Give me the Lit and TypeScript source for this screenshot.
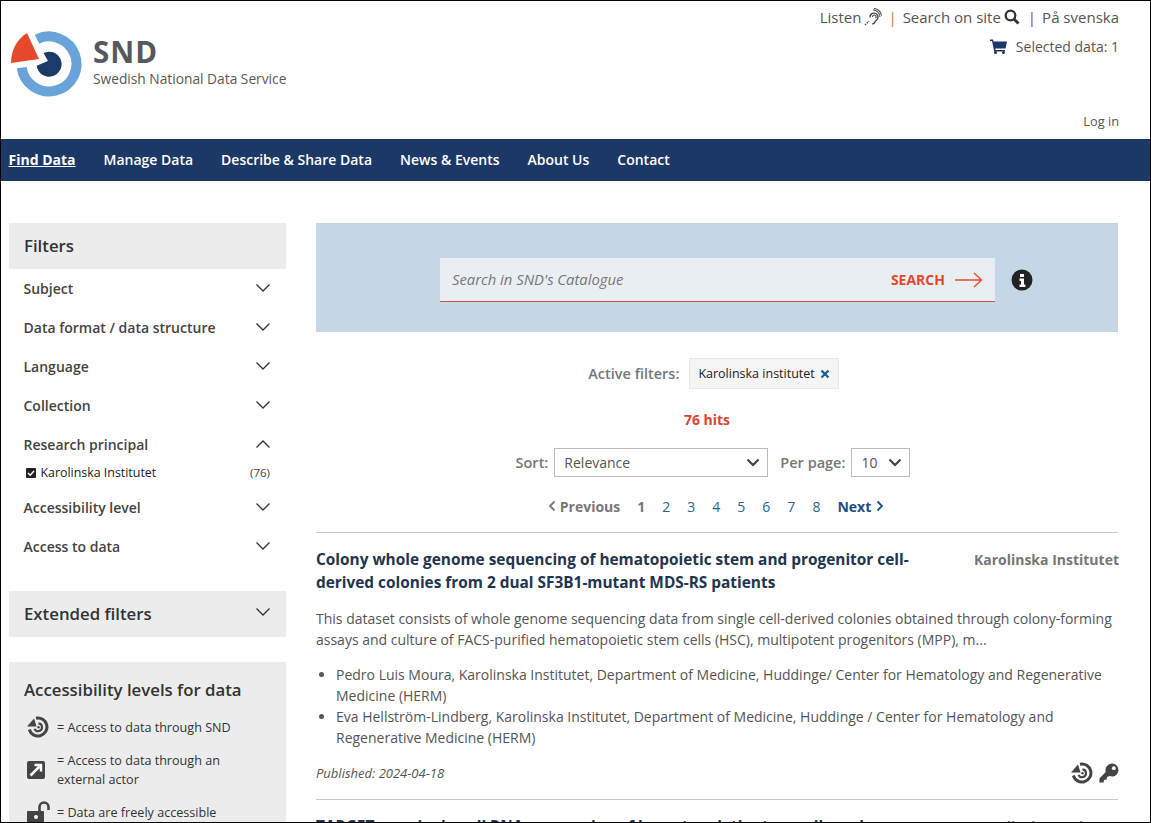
import { LitElement, html, css, svg } from "lit";
import { customElement } from "lit/decorators.js";

const chevDown = html`<svg class="chev" viewBox="0 0 16 10" width="16" height="10"><path d="M1.500 1.500 8 8l6.500-6.500" fill="none" stroke="currentColor" stroke-width="1.300"/></svg>`;
const chevUp = html`<svg class="chev" viewBox="0 0 16 10" width="16" height="10"><path d="M1.500 8.500 8 2l6.500 6.500" fill="none" stroke="currentColor" stroke-width="1.300"/></svg>`;
const thickDown = html`<svg viewBox="0 0 14 9" width="14" height="9"><path d="M1.500 1.500 7 7l5.500-5.500" fill="none" stroke="#444" stroke-width="2.200"/></svg>`;

const sndIcon = (s: number) => html`<svg viewBox="0 0 22 22" width=${s} height=${s}>
  <path d="M9 2.200A9 9 0 1 1 2.300 13.500" fill="none" stroke="#444" stroke-width="3"/>
  <path d="M0 10.500 7 2.500 9.500 10.500Z" fill="#444"/>
  <path d="M11.500 7.400A3.900 3.900 0 1 1 7.500 12.800" fill="none" stroke="#444" stroke-width="2.100"/>
  <circle cx="11.500" cy="11.300" r="1.200" fill="#444"/>
</svg>`;

const externalIcon = html`<svg viewBox="0 0 18 18" width="18" height="18">
  <rect width="18" height="18" rx="2" fill="#444"/>
  <path d="M3.500 14.500 12.500 5.500M7.500 4H14V10.500" fill="none" stroke="#fff" stroke-width="2.500"/>
</svg>`;

const lockIcon = html`<svg viewBox="0 0 24 22" width="24" height="22">
  <path d="M1 10h15a1 1 0 0 1 1 1v11H0V11a1 1 0 0 1 1-1Z" fill="#444"/>
  <path d="M12.500 10V6a4.500 4.500 0 0 1 9 0v3" fill="none" stroke="#444" stroke-width="2.600"/>
  <circle cx="9" cy="16" r="2" fill="#fff"/>
</svg>`;

const keyIcon = html`<svg viewBox="0 0 20 20" width="20" height="20">
  <path d="M13 .5a6.500 6.500 0 0 0-6.200 8.500L.6 15.200.3 19.500h4.200l.6-2.500 2.500-.5.500-2.500 2.600-.9A6.500 6.500 0 1 0 13 .5Z" fill="#444"/>
  <circle cx="14.800" cy="5.200" r="1.900" fill="#fff"/>
</svg>`;

const filters = ["Subject", "Data format / data structure", "Language", "Collection"];
const filters2 = ["Accessibility level", "Access to data"];

@customElement("app-root")
export class AppRoot extends LitElement {
  static styles = css`
    :host { display: block; font-family: "Open Sans", sans-serif; color: #333; }
    * { box-sizing: border-box; }
    .frame { height: 823px; border: 1px solid #000; overflow: hidden; background: #fff; }

    header { height: 138px; display: flex; justify-content: space-between; padding: 0 31px 0 9px; }
    .logo { display: flex; align-items: flex-start; padding-top: 29px; gap: 9px; }
    .logo-text { padding-top: 5px; color: #58585a; }
    .snd { font-size: 29.500px; font-weight: 700; line-height: 33px; letter-spacing: 1px; }
    .tag { font-size: 13.750px; line-height: 18px; margin-top: 2px; }
    .top { display: flex; flex-direction: column; align-items: flex-end; font-size: 15px; color: #555; }
    .links { display: flex; align-items: center; height: 22px; margin-top: 5px; }
    .links svg { margin-left: 3px; }
    .sep { margin: 0 6px 0 10px; }
    .sep.o { color: #c77b3a; margin-left: 6px; }
    .sep.p { color: #8a3a8a; margin-left: 8px; }
    .cart { display: flex; align-items: center; gap: 9px; margin-top: 7px; font-size: 14px; height: 22px; }
    .login { margin-top: auto; font-size: 12.800px; line-height: 18px; padding-bottom: 9px; }

    nav { height: 42px; background: #1c3866; display: flex; align-items: center; padding: 0 0 2px 7.500px; gap: 28px; color: #fff; font-size: 14px; font-weight: 600; }
    nav .cur { font-weight: 700; text-decoration: underline; }

    .body { display: grid; grid-template-columns: 277px 802px; gap: 30px; padding: 42px 0 0 8px; }

    .head { background: #ececec; height: 46px; display: flex; align-items: center; justify-content: space-between; padding: 0 15px 2px; font-size: 16.800px; font-weight: 600; color: #333; }
    .list { padding: 0 15px 0 14.500px; margin-bottom: 25px; }
    .fl { height: 39px; display: flex; align-items: center; justify-content: space-between; font-size: 14px; font-weight: 600; color: #444; }
    .chev { color: #333; margin-bottom: 2px; }
    .sub { display: flex; align-items: center; font-size: 12.400px; color: #222; height: 15px; margin-top: 1px; margin-bottom: 8px; padding-left: 2px; }
    .cb { width: 10px; height: 10px; background: #222; border-radius: 1px; margin-right: 5px; display: flex; }
    .cnt { margin-left: auto; font-size: 11.500px; color: #444; padding-right: 1px; }
    .ext { margin-bottom: 25px; }
    .acc { background: #ececec; padding: 16px 15px 0; height: 200px; }
    .acc h3 { margin: 0 0 14px; font-size: 16.800px; font-weight: 600; color: #333; line-height: 24px; }
    .lv { display: grid; grid-template-columns: 33px 1fr; font-size: 12.600px; line-height: 19px; color: #333; align-items: center; margin-bottom: 13px; padding-right: 22px; }
    .lv + .lv + .lv { margin-top: -1px; }
    .lv .ic { display: flex; padding-left: 3px; }

    .hero { height: 109px; background: #c5d7e6; display: flex; padding: 35px 0 0 124px; gap: 16px; align-items: flex-start; }
    .box { width: 555px; height: 44px; background: #e9eef3; border-bottom: 1px solid #d9503c; display: flex; align-items: center; justify-content: space-between; padding: 0 12px; }
    .ph { font-size: 14.800px; font-style: italic; color: #777; padding-bottom: 2px; }
    .go { display: flex; align-items: center; gap: 10px; color: #e2492f; font-weight: 700; font-size: 14px; }
    .info { margin-top: 11px; display: flex; }

    .active { display: flex; justify-content: center; align-items: center; gap: 10px; margin-top: 26px; padding-right: 7px; font-size: 14.500px; font-weight: 600; color: #777; }
    .chip { height: 31px; background: #f5f5f5; border: 1px solid #e8e8e8; display: flex; align-items: center; gap: 5px; padding: 0 8px; font-size: 12.500px; font-weight: 400; color: #222; }
    .hits { text-align: center; color: #d9452e; font-size: 14px; font-weight: 700; margin-top: 21px; line-height: 20px; padding-right: 20px; }
    .sort { display: flex; justify-content: center; align-items: center; margin-top: 18px; padding-right: 8px; font-size: 14.500px; font-weight: 600; color: #777; }
    .sel { height: 29px; border: 1px solid #bbb; display: flex; align-items: center; justify-content: space-between; padding: 0 7px 0 9px; font-size: 14px; font-weight: 400; color: #555; margin-left: 6px; background: #fff; }
    .sel.a { width: 214px; margin-right: 12px; }
    .sel.b { width: 59px; }
    .pager { display: flex; justify-content: center; align-items: center; margin-top: 19px; padding-right: 2px; height: 20px; font-size: 14px; color: #2a6496; }
    .pager span { margin-right: 17px; }
    .pager .pv { color: #777; font-weight: 700; display: flex; align-items: center; gap: 4px; }
    .pager .cur { color: #777; font-weight: 700; }
    .pager .nx { color: #1c4f86; font-weight: 700; margin: 0; display: flex; align-items: center; gap: 5px; }

    .rec { border-top: 1px solid #c8c8c8; margin-top: 16px; height: 267px; }
    .rtop { display: flex; justify-content: space-between; padding-top: 15px; margin-right: -1px; }
    .rtitle { width: 610px; font-size: 15.400px; line-height: 23px; font-weight: 700; color: #23344f; }
    .rorg { font-size: 14px; font-weight: 700; color: #777; line-height: 23px; }
    .desc { margin: 14px 0 0; font-size: 14px; line-height: 21px; color: #555; }
    ul { margin: 14px 0 0; padding-left: 20px; font-size: 14px; line-height: 21px; color: #555; }
    .pub { display: flex; justify-content: space-between; align-items: center; margin-top: 13px; font-size: 13px; font-style: italic; color: #555; height: 24px; margin-right: -1px; }
    .icons { display: flex; gap: 6px; align-items: center; }
    .rec2 { border-top: 1px solid #c8c8c8; }
  `;

  render() {
    return html`<div class="frame">
      <header>
        <div class="logo">
          <svg viewBox="0 0 74 68" width="74" height="68">
            ${svg`<path d="M27 9.200A27.500 27.500 0 1 1 11.700 37.600" fill="none" stroke="#6aa3d9" stroke-width="10"/>
            <path d="M17 3 29 29 1 33C1 20 7 9 17 3Z" fill="#e4492c"/>
            <path d="M33.500 23A12.500 12.500 0 1 1 26.700 35.700L38 31Z" fill="#1d3a68"/>`}
          </svg>
          <div class="logo-text">
            <div class="snd">SND</div>
            <div class="tag">Swedish National Data Service</div>
          </div>
        </div>
        <div class="top">
          <div class="links">
            <span>Listen</span>
            <svg viewBox="0 0 18 18" width="18" height="18"><path d="M6 9.500a4 4 0 1 1 7.500 1.500c-.8 1.300-2.200 1.500-2.700 3.200-.4 1.300-1.500 1.800-2.500 1.500" fill="none" stroke="#444" stroke-width="1.400"/><path d="M8.500 9a1.800 1.800 0 1 1 3 1.200M9 2a7 7 0 0 1 7 7M10 .5a8 8 0 0 1 7.500 7" fill="none" stroke="#444" stroke-width="1.100"/><path d="M1 17l4-4" stroke="#444" stroke-width="1.300" stroke-dasharray="1.500 1"/></svg>
            <span class="sep o">|</span>
            <span>Search on site</span>
            <svg viewBox="0 0 16 16" width="16" height="16"><circle cx="6.500" cy="6.500" r="4.800" fill="none" stroke="#333" stroke-width="2.300"/><path d="M10 10l4.500 4.500" stroke="#333" stroke-width="2.800"/></svg>
            <span class="sep p">|</span>
            <span>På svenska</span>
          </div>
          <div class="cart">
            <svg viewBox="0 0 17 15" width="17" height="15"><path d="M0 .5h3l.6 2H17l-1.500 7H5.300l.3 1.500h9.400v1.500H4.200L2 2H0Z" fill="#1c3866"/><circle cx="5.500" cy="13.500" r="1.500" fill="#1c3866"/><circle cx="13.500" cy="13.500" r="1.500" fill="#1c3866"/></svg>
            <span>Selected data: 1</span>
          </div>
          <div class="login">Log in</div>
        </div>
      </header>
      <nav>
        <span class="cur">Find Data</span>
        <span>Manage Data</span>
        <span>Describe &amp; Share Data</span>
        <span>News &amp; Events</span>
        <span>About Us</span>
        <span>Contact</span>
      </nav>
      <div class="body">
        <aside>
          <div class="head">Filters</div>
          <div class="list">
            ${filters.map((f) => html`<div class="fl"><span>${f}</span>${chevDown}</div>`)}
            <div class="fl"><span>Research principal</span>${chevUp}</div>
            <div class="sub">
              <span class="cb"><svg viewBox="0 0 10 10" width="10" height="10"><path d="M2 5l2.200 2.200L8 3" fill="none" stroke="#fff" stroke-width="1.500"/></svg></span>
              Karolinska Institutet
              <span class="cnt">(76)</span>
            </div>
            ${filters2.map((f) => html`<div class="fl"><span>${f}</span>${chevDown}</div>`)}
          </div>
          <div class="head ext"><span>Extended filters</span>${chevDown}</div>
          <div class="acc">
            <h3>Accessibility levels for data</h3>
            <div class="lv"><span class="ic">${sndIcon(22)}</span><span>= Access to data through SND</span></div>
            <div class="lv"><span class="ic">${externalIcon}</span><span>= Access to data through an external actor</span></div>
            <div class="lv"><span class="ic">${lockIcon}</span><span>= Data are freely accessible</span></div>
          </div>
        </aside>
        <main>
          <div class="hero">
            <div class="box">
              <span class="ph">Search in SND's Catalogue</span>
              <span class="go">SEARCH
                <svg viewBox="0 0 28 16" width="28" height="16"><path d="M0 8h27M19 1l7.500 7-7.500 7" fill="none" stroke="#e2492f" stroke-width="1.300"/></svg>
              </span>
            </div>
            <span class="info"><svg viewBox="0 0 22 22" width="22" height="22"><circle cx="11" cy="11" r="10.500" fill="#222"/><path d="M9 5h4v3H9ZM8.500 9.500H13v6h1.500V18h-6v-2.500H10v-3.500H8.500Z" fill="#fff"/></svg></span>
          </div>
          <div class="active">
            <span>Active filters:</span>
            <span class="chip">Karolinska institutet
              <svg viewBox="0 0 10 10" width="10" height="10"><path d="M1.500 1.500l7 7M8.500 1.500l-7 7" stroke="#1c5c96" stroke-width="2.200"/></svg>
            </span>
          </div>
          <div class="hits">76 hits</div>
          <div class="sort">
            <span>Sort:</span>
            <span class="sel a">Relevance ${thickDown}</span>
            <span>Per page:</span>
            <span class="sel b">10 ${thickDown}</span>
          </div>
          <div class="pager">
            <span class="pv"><svg viewBox="0 0 8 12" width="8" height="12"><path d="M6.500 1.500 2 6l4.500 4.500" fill="none" stroke="#777" stroke-width="1.800"/></svg>Previous</span>
            <span class="cur">1</span><span>2</span><span>3</span><span>4</span><span>5</span><span>6</span><span>7</span><span>8</span>
            <span class="nx">Next <svg viewBox="0 0 8 12" width="8" height="12"><path d="M1.500 1.500 6 6l-4.500 4.500" fill="none" stroke="#1c4f86" stroke-width="1.800"/></svg></span>
          </div>
          <div class="rec">
            <div class="rtop">
              <div class="rtitle">Colony whole genome sequencing of hematopoietic stem and progenitor cell-derived colonies from 2 dual SF3B1-mutant MDS-RS patients</div>
              <div class="rorg">Karolinska Institutet</div>
            </div>
            <p class="desc">This dataset consists of whole genome sequencing data from single cell-derived colonies obtained through colony-forming assays and culture of FACS-purified hematopoietic stem cells (HSC), multipotent progenitors (MPP), m...</p>
            <ul>
              <li>Pedro Luis Moura, Karolinska Institutet, Department of Medicine, Huddinge/ Center for Hematology and Regenerative Medicine (HERM)</li>
              <li>Eva Hellström-Lindberg, Karolinska Institutet, Department of Medicine, Huddinge / Center for Hematology and Regenerative Medicine (HERM)</li>
            </ul>
            <div class="pub">
              <span>Published: 2024-04-18</span>
              <span class="icons">${sndIcon(22)}${keyIcon}</span>
            </div>
          </div>
          <div class="rec2">
            <div class="rtop">
              <div class="rtitle">TARGET-seq single-cell RNA sequencing of hematopoietic stem cells and</div>
              <div class="rorg">Karolinska Institutet</div>
            </div>
          </div>
        </main>
      </div>
    </div>`;
  }
}
